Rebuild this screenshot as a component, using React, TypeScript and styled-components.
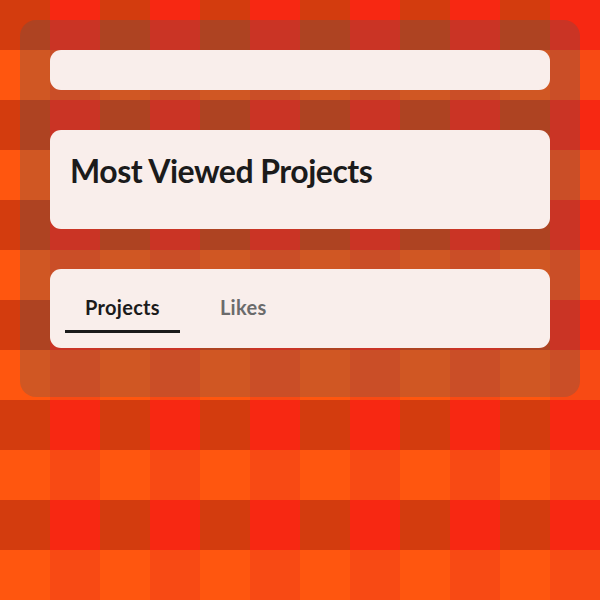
import styled, { createGlobalStyle } from "styled-components";
import { useState } from "react";

const GlobalStyle = createGlobalStyle`
  html, body {
    margin: 0;
    padding: 0;
    width: 600px;
    height: 600px;
    overflow: hidden;
  }
  body {
    font-family: Lato, "Liberation Sans", sans-serif;
    background-color: #f04010;
    background-image: conic-gradient(
      from 0deg at 50% 50%,
      #f72812 0 25%,
      #f84a14 0 50%,
      #ff560f 0 75%,
      #d33c0e 0 100%
    );
    background-size: 100px 100px;
  }
`;

const tabs = ["Projects", "Likes"];

const App = () => {
  const [activeTab, setActiveTab] = useState(0);

  return (
    <>
      <GlobalStyle />
      <Page>
        <Panel>
          <SearchCard />
          <HeaderCard>
            <Title>Most Viewed Projects</Title>
          </HeaderCard>
          <TabsCard>
            {tabs.map((each, index) => (
              <Tab
                key={each}
                $active={activeTab === index}
                onClick={() => setActiveTab(index)}
              >
                {each}
              </Tab>
            ))}
          </TabsCard>
        </Panel>
      </Page>
    </>
  );
};

const Page = styled.div`
  display: flex;
  width: 600px;
  height: 600px;
  padding: 20px;
  box-sizing: border-box;
  align-items: flex-start;
`;

const Panel = styled.div`
  display: flex;
  flex-direction: column;
  gap: 40px;
  width: 100%;
  padding: 30px 30px 49px;
  box-sizing: border-box;
  border-radius: 16px;
  background: rgba(60, 90, 100, 0.24);
`;

const Card = styled.div`
  display: flex;
  width: 100%;
  box-sizing: border-box;
  border-radius: 11px;
  background: #f9eeeb;
`;

const SearchCard = styled(Card)`
  height: 40px;
`;

const HeaderCard = styled(Card)`
  height: 99px;
  padding: 17px 20px 0;
  align-items: flex-start;
`;

const Title = styled.h2`
  margin: 0;
  color: #1b1b1b;
  font-size: 32px;
  line-height: 48px;
  font-weight: 700;
  letter-spacing: -0.5px;
`;

const TabsCard = styled(Card)`
  height: 79px;
  padding: 15px;
  gap: 20px;
`;

const Tab = styled.div<{ $active: boolean }>`
  display: flex;
  align-items: center;
  justify-content: center;
  padding: 0 20px;
  height: 49px;
  box-sizing: border-box;
  border-bottom: 3px solid ${(p) => (p.$active ? "#1b1b1b" : "transparent")};
  color: ${(p) => (p.$active ? "#1b1b1b" : "#6b6b6b")};
  font-size: 20px;
  font-weight: 700;
  letter-spacing: 0.3px;
  cursor: pointer;
  user-select: none;
`;

export default App;
